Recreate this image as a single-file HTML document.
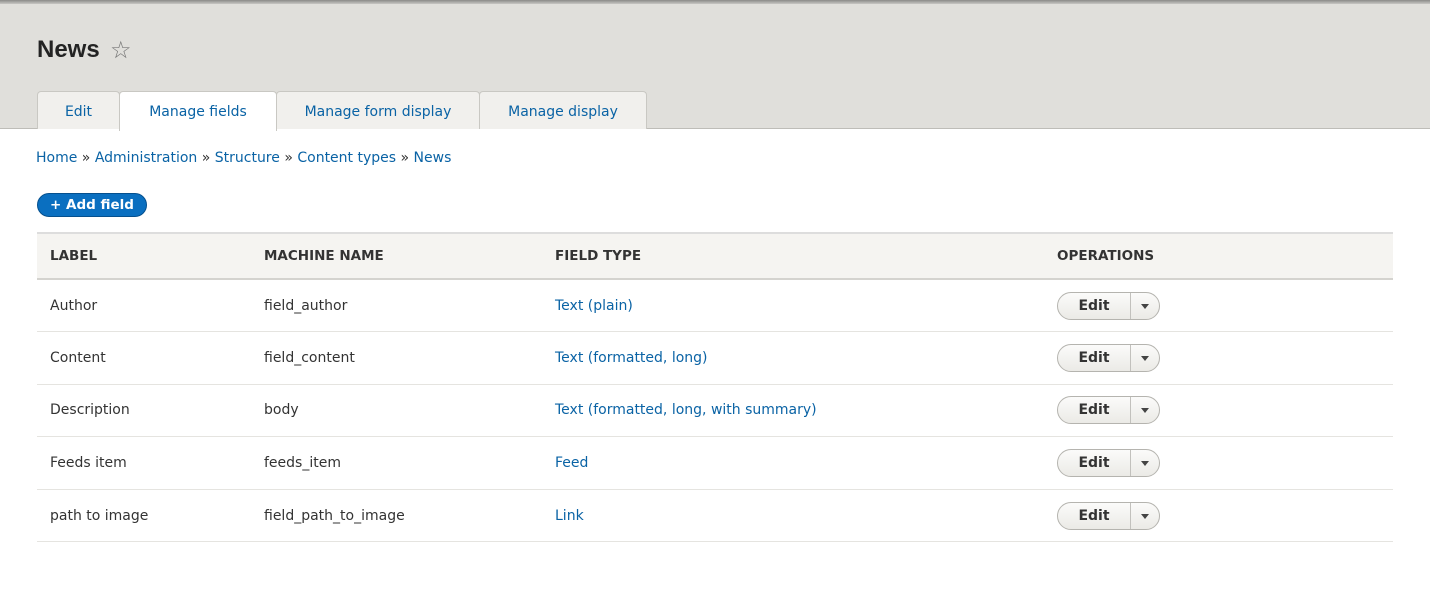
<!DOCTYPE html>
<html><head><style>
*{margin:0;padding:0;box-sizing:border-box}
body{width:1430px;height:616px;background:#fff;font-family:"DejaVu Sans",sans-serif;position:relative;overflow:hidden;color:#222}
.hdr{position:absolute;left:0;top:0;width:1430px;height:129px;background:#e0dfdb;border-bottom:1px solid #bebdb8}
.topbar{position:absolute;left:0;top:0;width:1430px;height:4px;background:linear-gradient(#8a8a88,#c8c7c3)}
h1{position:absolute;left:37px;top:36px;font-family:"Liberation Sans",sans-serif;font-size:24px;font-weight:bold;color:#232323}
.star{position:absolute;left:110px;top:36px;font-size:24px;color:#777}
.tab{position:absolute;top:91px;height:38px;background:#f1f0ed;border:1px solid #c9c8c3;border-bottom:none;border-radius:4px 4px 0 0;color:#0a63a5;font-size:14px;text-align:center;line-height:40px}
.tab.act{background:#fff;height:40px;z-index:2}
.bc{position:absolute;left:36px;top:150px;font-size:14px;color:#0a63a5}
.bc span{color:#333}
.btn{position:absolute;left:37px;top:193px;width:110px;height:24px;border-radius:12px;background:#0a6fc0;border:1px solid #05508e;color:#fff;font-weight:bold;font-size:13.5px;text-align:center;line-height:22px}
table{position:absolute;left:37px;top:232px;width:1356px;border-collapse:collapse;font-size:14px}
th{background:#f5f4f1;text-align:left;height:46px;font-size:13.5px;font-weight:bold;color:#333;border-top:2px solid #ddd;border-bottom:2px solid #d4d3cf;padding-left:13px}
td{height:52.6px;border-bottom:1px solid #e5e4e0;padding-left:13px;color:#333}
td.l{color:#0a63a5}
.ops{display:inline-flex;width:103px;height:28px;border:1px solid #b5b4af;border-radius:14px;background:linear-gradient(#fbfbfa,#ebeae6);vertical-align:middle}
.ops b{width:73px;text-align:center;line-height:26px;font-size:14px;color:#333;border-right:1px solid #c2c1bd}
.ops i{flex:1;position:relative}
.ops i:after{content:"";position:absolute;left:10px;top:11px;border:4px solid transparent;border-top:5px solid #444}
</style></head><body>
<div class="hdr"><div class="topbar"></div></div>
<h1>News</h1><div class="star">☆</div>
<div class="tab" style="left:37px;width:83px">Edit</div>
<div class="tab act" style="left:119px;width:158px">Manage fields</div>
<div class="tab" style="left:276px;width:204px">Manage form display</div>
<div class="tab" style="left:479px;width:168px">Manage display</div>
<div class="bc">Home <span>»</span> Administration <span>»</span> Structure <span>»</span> Content types <span>»</span> News</div>
<div class="btn">+ Add field</div>
<table>
<tr><th style="width:214px">LABEL</th><th style="width:291px">MACHINE NAME</th><th style="width:502px">FIELD TYPE</th><th>OPERATIONS</th></tr>
<tr><td>Author</td><td>field_author</td><td class="l">Text (plain)</td><td><span class="ops"><b>Edit</b><i></i></span></td></tr>
<tr><td>Content</td><td>field_content</td><td class="l">Text (formatted, long)</td><td><span class="ops"><b>Edit</b><i></i></span></td></tr>
<tr><td>Description</td><td>body</td><td class="l">Text (formatted, long, with summary)</td><td><span class="ops"><b>Edit</b><i></i></span></td></tr>
<tr><td>Feeds item</td><td>feeds_item</td><td class="l">Feed</td><td><span class="ops"><b>Edit</b><i></i></span></td></tr>
<tr><td>path to image</td><td>field_path_to_image</td><td class="l">Link</td><td><span class="ops"><b>Edit</b><i></i></span></td></tr>
</table>
</body></html>
